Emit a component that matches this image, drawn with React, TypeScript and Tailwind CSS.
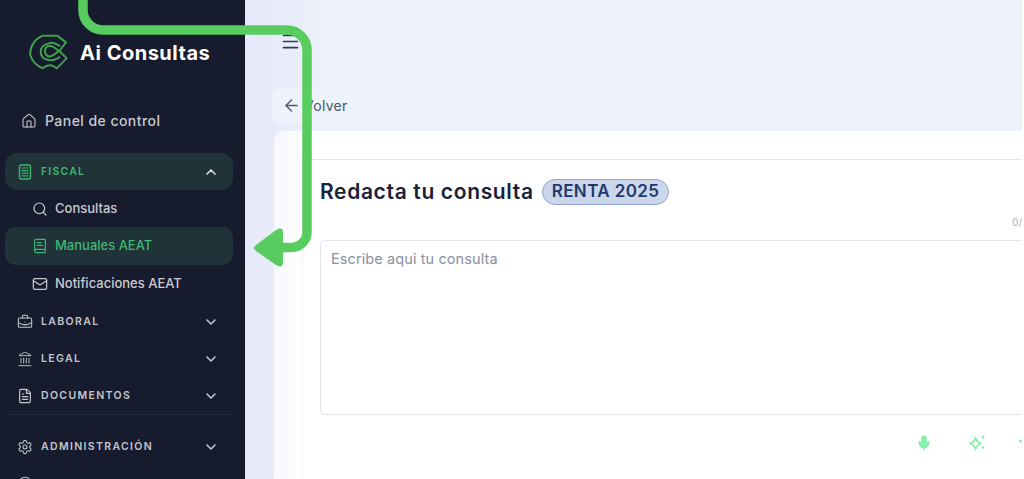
import { ArrowLeft, BookText, ChevronDown, ChevronUp, CircleUser, FileText, Landmark, Mail, Menu, Mic, Search, Send, Settings, BriefcaseBusiness, House } from 'lucide-react';
import type { ReactNode } from 'react';

const font = { fontFamily: "'Inter', 'Noto Sans', sans-serif" };

function Logo() {
  return (
    <svg className="-mt-[6px] shrink-0" width="60" height="50" viewBox="0 0 180 150" fill="none" stroke="#3f9f4a" strokeWidth="6" strokeLinejoin="round" strokeLinecap="round">
      <path d="M112 32 L68 32 Q32 48 30 88 Q38 118 68 130 Q90 112 110 130 L140 100 L118 78 L138 52 Z" />
      <path d="M118 62 Q100 50 85 55 Q62 62 62 80 Q62 100 85 105 Q100 108 118 97" />
      <path d="M116 78 Q100 62 88 62 Q75 65 75 78 Q75 92 88 95 Q100 93 116 78 Z" />
    </svg>
  );
}

function LedgerIcon() {
  return (
    <svg width="16" height="16" viewBox="0 0 16 16" fill="none" stroke="currentColor" strokeWidth="1.4" strokeLinecap="round">
      <rect x="2.5" y="1" width="11" height="14" rx="1.5" />
      <path d="M5 4h6M5 6.6h6M5 9.2h6M5 11.8h6" strokeWidth="1.2" />
    </svg>
  );
}

function SparkIcon() {
  return (
    <svg width="16" height="16" viewBox="0 0 16 16" fill="none" stroke="currentColor" strokeWidth="1.7" strokeLinejoin="round">
      <path d="M6.5 2.5 Q7.5 7 12 8.5 Q7.5 10 6.5 14.5 Q5.5 10 1 8.5 Q5.5 7 6.5 2.5 Z" />
      <path d="M14 0.5v3M12.6 2h2.8M14 11v3M12.6 12.5h2.8" strokeWidth="1.4" />
    </svg>
  );
}

function Section({ icon, label }: { icon: ReactNode; label: string }) {
  return (
    <div className="flex h-[37px] shrink-0 items-center pl-[12px] pr-[14px] text-[#c3c5cc]">
      <span className="flex w-[24px] shrink-0">{icon}</span>
      <span className="text-[10.5px] font-semibold tracking-[1.35px]">{label}</span>
      <ChevronDown className="ml-auto" size={16} strokeWidth={2.4} />
    </div>
  );
}

function SubItem({ icon, label, active }: { icon: ReactNode; label: string; active?: boolean }) {
  return (
    <div className={`flex shrink-0 items-center rounded-[10px] pl-[27px] text-[13px] font-medium ${active ? 'h-[38px] bg-[#1f3339] text-[#3fb771]' : 'h-[37px] text-[#c9cad0]'}`}>
      <span className="flex w-[23px] shrink-0">{icon}</span>
      <span>{label}</span>
    </div>
  );
}

export default function App() {
  return (
    <div className="relative flex h-[479px] w-[1024px] overflow-hidden bg-white" style={font}>
      {/* sidebar */}
      <aside className="flex h-full w-[245px] shrink-0 flex-col overflow-hidden bg-[#161b2e] pl-[5px] pr-[12px]">
        <div className="flex h-[103px] shrink-0 items-center pl-[15px] pt-[3px]">
          <Logo />
          <span className="text-[20px] font-bold tracking-[0.5px] text-white">Ai Consultas</span>
        </div>
        <div className="flex h-[36px] shrink-0 items-center pb-[1px] pl-[16px] text-[14px] font-medium tracking-[0.45px] text-[#c9cad0]">
          <House size={16} strokeWidth={1.6} className="mr-[8px]" />
          Panel de control
        </div>
        <div className="mt-[14px] flex h-[37px] shrink-0 items-center rounded-[12px] bg-[#1f3339] pl-[12px] pr-[14px] text-[#3fb771]">
          <span className="flex w-[24px] shrink-0"><LedgerIcon /></span>
          <span className="text-[10.5px] font-semibold tracking-[1.2px]">FISCAL</span>
          <ChevronUp className="ml-auto text-[#d8dadf]" size={16} strokeWidth={2.6} />
        </div>
        <SubItem icon={<Search size={16} strokeWidth={1.8} />} label="Consultas" />
        <SubItem active icon={<BookText size={16} strokeWidth={1.8} />} label="Manuales AEAT" />
        <SubItem icon={<Mail size={16} strokeWidth={1.8} />} label="Notificaciones AEAT" />
        <div className="h-[1px] shrink-0" />
        <Section icon={<BriefcaseBusiness size={16} strokeWidth={1.6} />} label="LABORAL" />
        <Section icon={<Landmark size={16} strokeWidth={1.4} />} label="LEGAL" />
        <Section icon={<FileText size={16} strokeWidth={1.8} />} label="DOCUMENTOS" />
        <div className="mb-[13px] shrink-0 border-t border-[#23283b]" />
        <Section icon={<Settings size={16} strokeWidth={1.6} />} label="ADMINISTRACIÓN" />
        <div className="flex h-[37px] shrink-0 items-center pl-[12px] text-[#c3c5cc]">
          <CircleUser size={16} strokeWidth={1.6} />
        </div>
      </aside>

      {/* main */}
      <main className="mr-[2px] flex min-w-0 flex-1 flex-col overflow-hidden bg-gradient-to-r from-[#e6e9f9] via-[#e8ebfa] via-[4%] to-[#edf1fa] to-[10%]">
        <div className="h-[88px] shrink-0 pl-[35px] pt-[31px] text-[#2c3a55]">
          <Menu size={21} strokeWidth={1.8} />
        </div>
        <div className="ml-[27px] flex h-[35px] w-[92px] shrink-0 items-center rounded-[8px] bg-[#eef2fa] pl-[10px] text-[14px] tracking-[0.3px] text-[#4a556c]">
          <ArrowLeft size={19} strokeWidth={1.7} className="mr-[3px] text-[#4b5872]" />
          Volver
        </div>
        <section className="ml-[29px] mt-[8px] flex min-h-0 flex-1 flex-col overflow-hidden rounded-tl-[10px] bg-gradient-to-r from-[#f6f8fe] to-white to-[4%]">
          <div className="ml-[28px] mt-[28px] flex flex-1 flex-col border-l border-t border-l-[#f1f3f6] border-t-[#e3e6ee] bg-white pl-[17px]">
            <div className="mt-[19px] flex h-[26px] shrink-0 items-center">
              <h1 className="text-[21px] font-semibold tracking-[0.65px] text-[#1a2136]">Redacta tu consulta</h1>
              <span className="ml-[8px] -mt-[1px] flex h-[26px] items-center rounded-full border border-[#8ea3cf] bg-[#ccd6ea] px-[9px] text-[17px] font-semibold tracking-[0.4px] text-[#1e3a6e]">RENTA 2025</span>
            </div>
            <div className="mt-[11px] h-[13px] shrink-0 text-right text-[10px] leading-[13px] text-[#a5adba]">0/</div>
            <div className="mt-[11px] h-[175px] shrink-0 rounded-l-[5px] border border-r-0 border-[#e2e5ee] pl-[10px] pt-[7px] text-[14.5px] tracking-[0.1px] text-[#8a90a0]">
              Escribe aqui tu consulta
            </div>
            <div className="-mr-[12px] mt-[20px] flex shrink-0 items-center justify-end gap-[37px] text-[#86efac]">
              <Mic size={16} strokeWidth={2.2} fill="currentColor" />
              <SparkIcon />
              <Send size={16} strokeWidth={2} className="-ml-[4px]" />
            </div>
          </div>
        </section>
      </main>

      {/* annotation arrow */}
      <svg className="pointer-events-none absolute left-0 top-0" width="1024" height="479" fill="none">
        <path d="M83 0 V10 A20 20 0 0 0 103 30 H287 A20 20 0 0 1 307 50 V232 A15.5 15.5 0 0 1 291.5 247.5 H278" stroke="#58cc5f" strokeWidth="9.5" />
        <path d="M256 245 L276 230 Q283 226 283 233 V262 Q283 269 276 265 L256 251 Q252 248 256 245 Z" fill="#58cc5f" />
      </svg>
    </div>
  );
}
